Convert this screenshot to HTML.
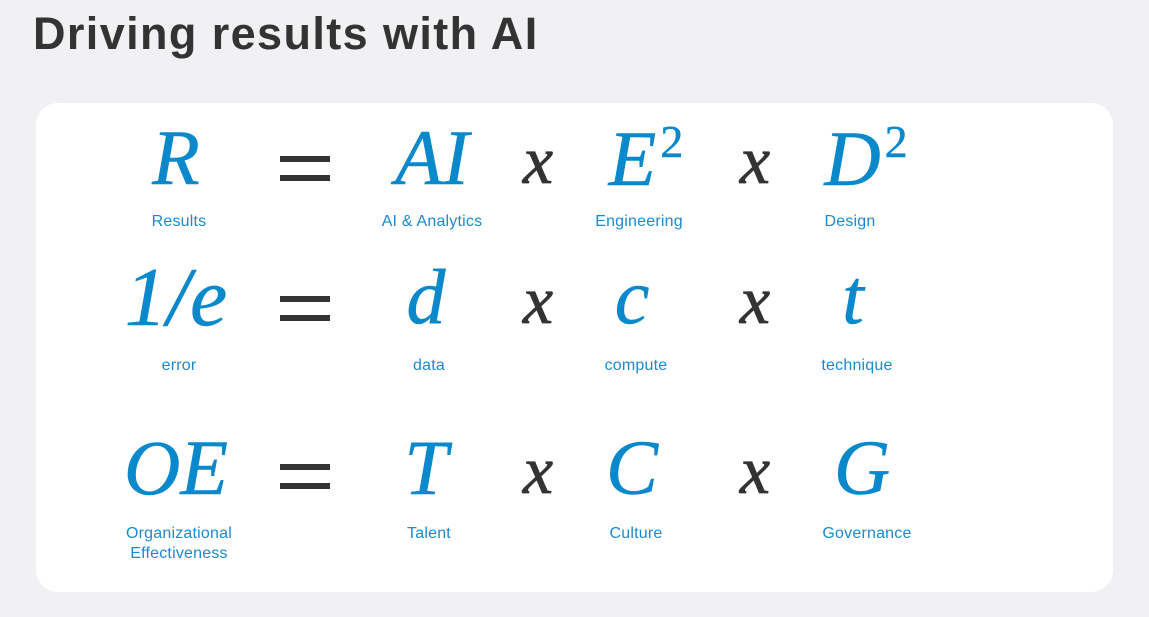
<!DOCTYPE html>
<html><head><style>
body{margin:0;width:1149px;height:617px;background:#f1f0f3;position:relative;overflow:hidden;font-family:"Liberation Sans",sans-serif}
h1{position:absolute;left:33px;top:8px;margin:0;font-size:45px;font-weight:bold;color:#333;letter-spacing:1.4px}
.card{position:absolute;left:36px;top:103px;width:1077px;height:489px;background:#fff;border-radius:22px}
.g{position:absolute;font-family:"Liberation Serif",serif;font-style:italic;color:#0a88cc;font-size:78px;line-height:1;transform:translateX(-50%);white-space:nowrap;-webkit-text-stroke:0.5px #0a88cc}
.x{color:#333;font-size:68px;-webkit-text-stroke:0.8px #333}
.l{position:absolute;font-size:16px;color:#1a8ad0;transform:translateX(-50%);text-align:center;line-height:20px;white-space:nowrap;letter-spacing:0.2px}
.eq{position:absolute;left:280px;width:50px;height:25px;border-top:6px solid #333;border-bottom:6px solid #333;box-sizing:border-box}
sup{font-style:normal;font-size:46px;vertical-align:28px;margin-left:4px}
</style></head><body>
<h1>Driving results with AI</h1>
<div class="card"></div>
<div class="g" style="left:176px;top:119px">R</div>
<div class="eq" style="top:156px"></div>
<div class="g" style="left:432px;top:119px">AI</div>
<div class="g x" style="left:538px;top:126px">x</div>
<div class="g" style="left:646px;top:119px">E<sup>2</sup></div>
<div class="g x" style="left:755px;top:126px">x</div>
<div class="g" style="left:866px;top:119px">D<sup>2</sup></div>
<div class="l" style="left:179px;top:212px">Results</div>
<div class="l" style="left:432px;top:212px">AI &amp; Analytics</div>
<div class="l" style="left:639px;top:212px">Engineering</div>
<div class="l" style="left:850px;top:212px">Design</div>

<div class="g" style="left:176px;top:256px;font-size:84px">1/e</div>
<div class="eq" style="top:296px"></div>
<div class="g" style="left:426px;top:258px">d</div>
<div class="g x" style="left:538px;top:266px">x</div>
<div class="g" style="left:632px;top:258px">c</div>
<div class="g x" style="left:755px;top:266px">x</div>
<div class="g" style="left:853px;top:258px">t</div>
<div class="l" style="left:179px;top:356px">error</div>
<div class="l" style="left:429px;top:356px">data</div>
<div class="l" style="left:636px;top:356px">compute</div>
<div class="l" style="left:857px;top:356px">technique</div>

<div class="g" style="left:176px;top:429px">OE</div>
<div class="eq" style="top:464px"></div>
<div class="g" style="left:426px;top:429px">T</div>
<div class="g x" style="left:538px;top:436px">x</div>
<div class="g" style="left:632px;top:429px">C</div>
<div class="g x" style="left:755px;top:436px">x</div>
<div class="g" style="left:862px;top:429px">G</div>
<div class="l" style="left:179px;top:524px">Organizational<br>Effectiveness</div>
<div class="l" style="left:429px;top:524px">Talent</div>
<div class="l" style="left:636px;top:524px">Culture</div>
<div class="l" style="left:867px;top:524px">Governance</div>
</body></html>
